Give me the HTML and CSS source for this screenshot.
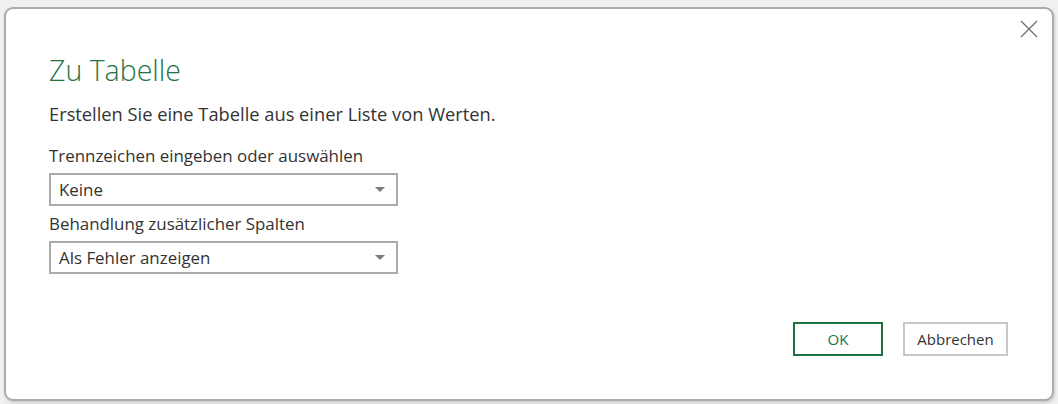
FILE: index.html
```html
<!DOCTYPE html>
<html lang="de">
<head>
<meta charset="utf-8">
<title>Zu Tabelle</title>
<link rel="stylesheet" href="styles.css">
</head>
<body>
<div class="dialog">
  <button class="close" aria-label="Schließen">
    <svg width="18" height="18" viewBox="0 0 18 18"><path d="M1 1L17 17M17 1L1 17" stroke="#6b6b6b" stroke-width="1.2" fill="none"/></svg>
  </button>
  <h1 class="title">Zu Tabelle</h1>
  <p class="desc">Erstellen Sie eine Tabelle aus einer Liste von Werten.</p>
  <div class="field">
    <label class="label">Trennzeichen eingeben oder auswählen</label>
    <div class="select"><span>Keine</span><span class="arrow"></span></div>
  </div>
  <div class="field">
    <label class="label">Behandlung zusätzlicher Spalten</label>
    <div class="select"><span>Als Fehler anzeigen</span><span class="arrow"></span></div>
  </div>
  <div class="buttons">
    <button class="btn primary">OK</button>
    <button class="btn">Abbrechen</button>
  </div>
</div>
</body>
</html>
```
FILE: styles.css
```css
html, body {
  margin: 0;
  padding: 0;
}
body {
  background: #f0f0f0;
  font-family: "Open Sans", "Noto Sans", sans-serif;
  color: #333;
  width: 1058px;
  height: 404px;
  overflow: hidden;
}
.dialog {
  position: relative;
  box-sizing: border-box;
  margin: 7px 0 0 4px;
  width: 1050px;
  height: 394px;
  background: #fff;
  border: 2px solid #ababab;
  border-radius: 9px;
  box-shadow: 1px 2px 3px rgba(0,0,0,0.15);
  padding: 43px 0 0 43px;
}
.close {
  position: absolute;
  top: 11px;
  right: 14px;
  background: none;
  border: 0;
  padding: 0;
  width: 18px;
  height: 18px;
}
.title {
  margin: 0;
  font-weight: 300;
  font-size: 28.5px;
  line-height: 36px;
  color: #217346;
}
.desc {
  margin: 14px 0 0;
  font-size: 18.3px;
  line-height: 24px;
  color: #333;
}
.field {
  margin-top: 19px;
}
.field + .field {
  margin-top: 7px;
}
.label {
  display: block;
  font-size: 16.9px;
  line-height: 22px;
  color: #333;
}
.select {
  box-sizing: border-box;
  margin-top: 6px;
  width: 349px;
  height: 33px;
  border: 2px solid #ababab;
  display: flex;
  align-items: center;
  justify-content: space-between;
  padding: 0 11px 0 8px;
  font-size: 16.9px;
  color: #333;
}
.arrow {
  width: 0;
  height: 0;
  border-left: 5px solid transparent;
  border-right: 5px solid transparent;
  border-top: 5px solid #7a7a7a;
}
.buttons {
  position: absolute;
  right: 44px;
  top: 313px;
  display: flex;
  gap: 20px;
}
.btn {
  box-sizing: border-box;
  height: 34px;
  min-width: 90px;
  padding: 0 11px;
  background: #fff;
  border: 2px solid #c8c8c8;
  font-family: inherit;
  font-size: 15px;
  color: #333;
}
.btn.primary {
  border-color: #217346;
  color: #217346;
}
.btn + .btn {
  min-width: 105px;
}
```
